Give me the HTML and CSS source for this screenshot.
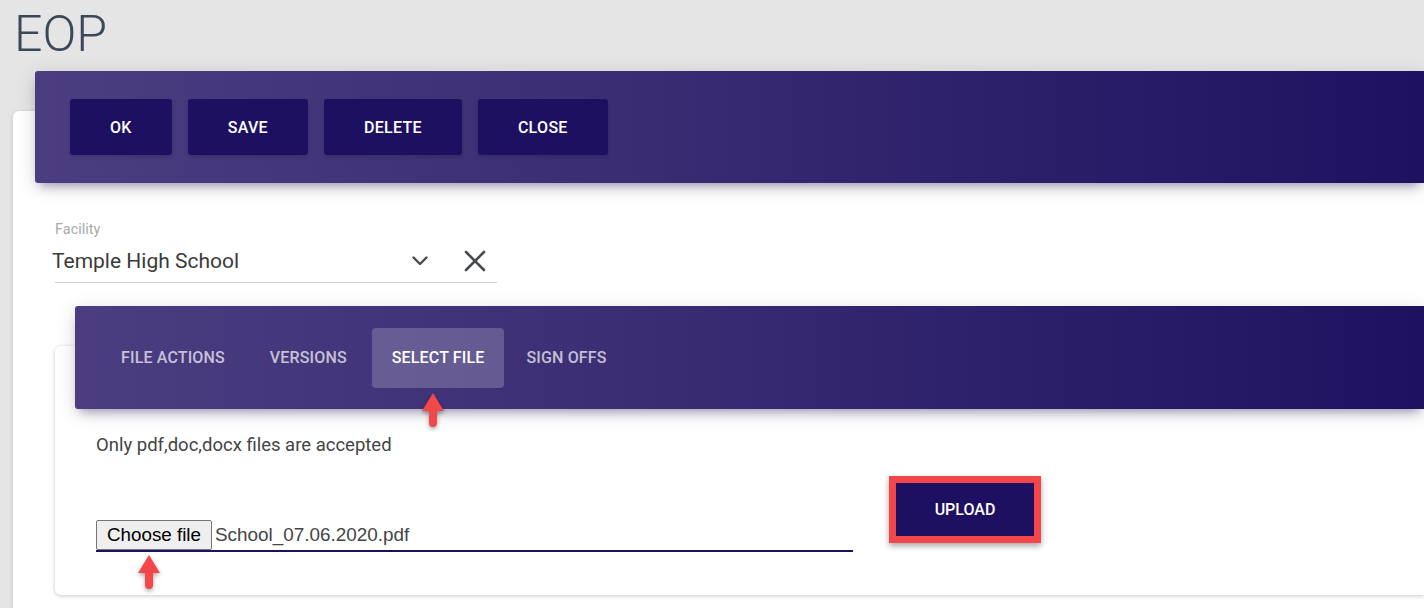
FILE: index.html
```html
<!DOCTYPE html>
<html>
<head>
<meta charset="utf-8">
<link rel="stylesheet" href="styles.css">
</head>
<body>
<h1 class="title">EOP</h1>
<div class="card">
  <div class="card-header">
    <button class="btn">OK</button>
    <button class="btn">SAVE</button>
    <button class="btn">DELETE</button>
    <button class="btn">CLOSE</button>
  </div>
  <div class="field">
    <div class="field-label">Facility</div>
    <div class="field-input">
      <span class="field-value">Temple High School</span>
      <span class="field-icons">
        <svg class="chev" width="16" height="10" viewBox="0 0 16 10"><polyline points="1.5,1.5 8,8 14.5,1.5" fill="none" stroke="#474a50" stroke-width="2.4" stroke-linecap="round" stroke-linejoin="round"/></svg>
        <svg class="clear" width="22" height="22" viewBox="0 0 22 22"><path d="M2 2 L20 20 M20 2 L2 20" fill="none" stroke="#474a50" stroke-width="2.6" stroke-linecap="round"/></svg>
      </span>
    </div>
  </div>
  <div class="inner-card">
    <div class="tabs">
      <span class="tab">FILE ACTIONS</span>
      <span class="tab">VERSIONS</span>
      <span class="tab active">SELECT FILE</span>
      <span class="tab">SIGN OFFS</span>
    </div>
    <div class="inner-body">
      <p class="note">Only pdf,doc,docx files are accepted</p>
      <div class="upload-row">
        <div class="file-input">
          <span class="choose">Choose file</span>
          <span class="file-name">School_07.06.2020.pdf</span>
        </div>
        <div class="upload-frame">
          <button class="btn upload">UPLOAD</button>
        </div>
      </div>
    </div>
  </div>
</div>
<div class="arrow arrow-tab"></div>
<div class="arrow arrow-file"></div>
</body>
</html>
```
FILE: styles.css
```css
html, body {
  margin: 0;
  padding: 0;
}
body {
  width: 1424px;
  height: 608px;
  overflow: hidden;
  background: #e5e5e5;
  font-family: Roboto, "Liberation Sans", sans-serif;
  position: relative;
}
.title {
  margin: 9px 0 0 14px;
  height: 51px;
  line-height: 51px;
  font-size: 50px;
  font-weight: 300;
  color: #3c4858;
}
.card {
  display: flow-root;
  margin: 51px 0 0 13px;
  width: 1411px;
  height: 497px;
  background: #fff;
  border-radius: 6px 0 0 0;
  box-shadow: 0 1px 4px 0 rgba(0,0,0,0.14);
  padding: 0 0 0 42px;
  box-sizing: border-box;
}
.card-header {
  position: relative;
  margin: -40px 0 0 -20px;
  height: 112px;
  padding: 28px 35px;
  box-sizing: border-box;
  border-radius: 3px 0 0 3px;
  background: linear-gradient(to right, #4b3d80 0%, #3b2e74 40%, #1e1160 100%);
  box-shadow: 0 4px 20px 0 rgba(0,0,0,0.14), 0 7px 10px -5px rgba(40,25,100,0.4);
  display: flex;
  gap: 16px;
}
.btn {
  height: 56px;
  padding: 0 40px;
  border: none;
  border-radius: 3px;
  background: #1e1060;
  color: #fff;
  font-family: Roboto, "Liberation Sans", sans-serif;
  font-size: 16px;
  font-weight: 500;
  letter-spacing: 0.3px;
  box-shadow: 0 2px 4px rgba(0,0,0,0.15);
}
.field {
  margin-top: 38px;
  width: 442px;
}
.field-label {
  font-size: 14.5px;
  line-height: 18px;
  color: #aaaaaa;
}
.field-input {
  margin-top: 8px;
  display: flex;
  align-items: center;
  border-bottom: 1px solid #d2d2d2;
  padding-bottom: 7px;
}
.field-value {
  flex: 1;
  margin-left: -3px;
  font-size: 21px;
  line-height: 28px;
  color: #3a3a3a;
}
.field-icons {
  display: flex;
  align-items: center;
  gap: 36px;
  margin-right: 11px;
}
.chev { display: block; }
.clear { display: block; }
.inner-card {
  display: flow-root;
  margin-top: 63px;
  height: 249px;
  background: #fff;
  border-radius: 6px 0 0 6px;
  box-shadow: 0 1px 4px 0 rgba(0,0,0,0.22);
}
.tabs {
  margin: -40px 0 0 20px;
  position: relative;
  height: 103px;
  padding: 22px 26px 0;
  box-sizing: border-box;
  border-radius: 3px 0 0 3px;
  background: linear-gradient(to right, #4b3d80 0%, #3b2e74 40%, #1e1160 100%);
  box-shadow: 0 4px 20px 0 rgba(0,0,0,0.14), 0 7px 10px -5px rgba(40,25,100,0.4);
  display: flex;
  align-items: flex-start;
  gap: 5px;
}
.tab {
  height: 60px;
  line-height: 60px;
  padding: 0 20px;
  border-radius: 4px;
  font-size: 16px;
  font-weight: 500;
  color: rgba(255,255,255,0.7);
  letter-spacing: 0.15px;
}
.tab.active {
  background: rgba(255,255,255,0.2);
  color: #fff;
  margin-right: -3px;
}
.inner-body {
  padding: 23px 0 0 41px;
}
.note {
  margin: 0;
  font-size: 18.5px;
  line-height: 26px;
  color: #444;
}
.upload-row {
  margin-top: 18px;
  display: flex;
  align-items: flex-start;
}
.file-input {
  margin-top: 44px;
  width: 757px;
  display: flex;
  align-items: center;
  border-bottom: 2px solid #1e1060;
}
.choose {
  box-sizing: border-box;
  height: 30px;
  line-height: 27px;
  padding: 0 10px;
  background: #efefef;
  border: 1px solid #767676;
  border-radius: 2px;
  font-family: "Liberation Sans", Arial, sans-serif;
  font-size: 18.8px;
  color: #000;
}
.file-name {
  margin-left: 3px;
  font-family: "Liberation Sans", Arial, sans-serif;
  font-size: 18.9px;
  color: #444;
}
.upload-frame {
  margin-left: 36px;
  border: 7px solid #f2464a;
  box-shadow: 0 3px 6px rgba(0,0,0,0.35);
  display: flex;
}
.btn.upload {
  height: 53px;
  width: 138px;
  padding: 0;
  border-radius: 0;
  box-shadow: none;
  letter-spacing: 0;
}
.arrow {
  position: absolute;
  width: 22px;
  height: 35px;
  filter: drop-shadow(0 2px 2px rgba(0,0,0,0.35));
}
.arrow::before {
  content: "";
  position: absolute;
  left: 0;
  top: 0;
  border-left: 11px solid transparent;
  border-right: 11px solid transparent;
  border-bottom: 18px solid #f4474a;
}
.arrow::after {
  content: "";
  position: absolute;
  left: 7px;
  top: 16px;
  width: 8px;
  height: 18px;
  border-radius: 0 0 4px 4px;
  background: #f4474a;
}
.arrow-tab {
  left: 422px;
  top: 393px;
}
.arrow-file {
  left: 138px;
  top: 555px;
}
```
